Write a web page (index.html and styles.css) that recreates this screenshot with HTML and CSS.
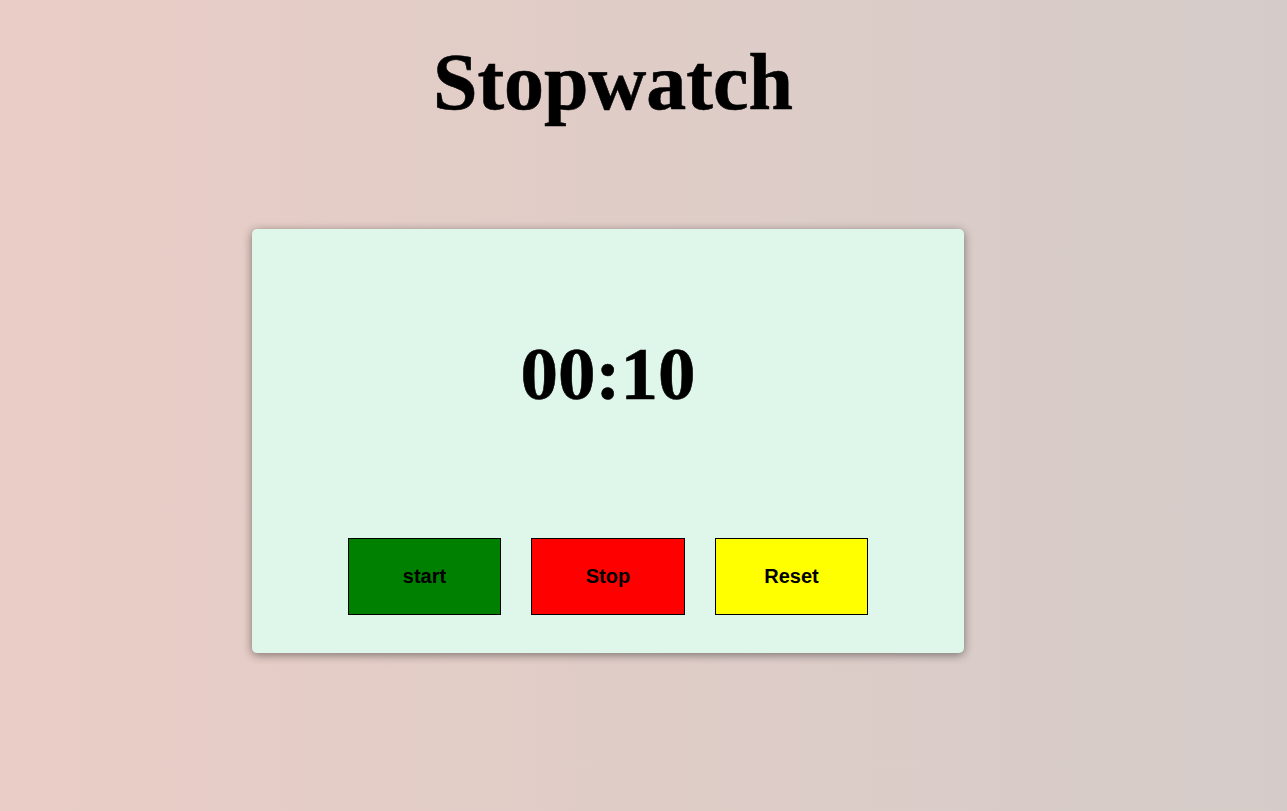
FILE: index.html
```html
<!DOCTYPE html>
<html>
<head>
<meta charset="utf-8">
<title>Stopwatch</title>
<link rel="stylesheet" href="styles.css">
</head>
<body>
<main class="page">
  <h1 class="title">Stopwatch</h1>
  <section class="card">
    <div class="timer">00:10</div>
    <div class="controls">
      <button class="btn btn-start">start</button>
      <button class="btn btn-stop">Stop</button>
      <button class="btn btn-reset">Reset</button>
    </div>
  </section>
</main>
</body>
</html>
```
FILE: styles.css
```css
html, body {
  margin: 0;
  padding: 0;
  height: 100%;
}
body {
  background: linear-gradient(to right, #eacdc6, #d5ccc9);
  font-family: "Liberation Serif", "Times New Roman", serif;
  color: #000;
}
.page {
  width: 1226px;
  display: flex;
  flex-direction: column;
}
.title {
  margin: 0;
  padding-top: 36px;
  font-size: 80px;
  line-height: 92px;
  font-weight: bold;
  text-align: center;
  -webkit-text-stroke: 0.6px #000;
}
.card {
  margin-top: 101px;
  margin-left: 252px;
  width: 712px;
  height: 424px;
  box-sizing: border-box;
  background: #dff6eb;
  border-radius: 5px;
  box-shadow: 0 2px 10px rgba(0, 0, 0, 0.45);
  padding-top: 107px;
  display: flex;
  flex-direction: column;
  align-items: center;
}
.timer {
  font-size: 75px;
  line-height: 75px;
  font-weight: bold;
  -webkit-text-stroke: 0.6px #000;
}
.controls {
  margin-top: 127px;
  display: flex;
  gap: 30px;
}
.btn {
  width: 154px;
  height: 77px;
  box-sizing: border-box;
  border: 1px solid #000;
  border-radius: 0;
  font-family: "Liberation Sans", Arial, sans-serif;
  font-size: 20px;
  font-weight: bold;
  color: #000;
  padding: 0;
}
.btn-start { background: #008000; width: 153px; }
.btn-stop { background: #ff0000; }
.btn-reset { background: #ffff00; width: 153px; }
```
